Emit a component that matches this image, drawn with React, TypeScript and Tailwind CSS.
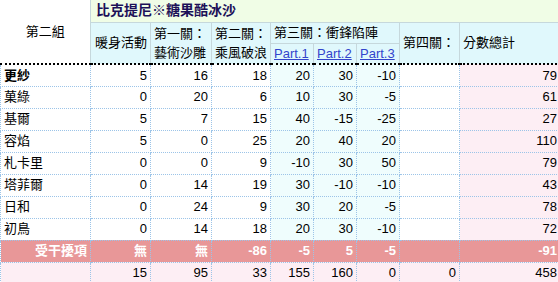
import { memo } from 'react'

const FONT = `font-['Liberation_Sans','Noto_Sans_CJK_TC',sans-serif]`
const HEAD = 'border border-[#c6d8dc] bg-[#e0f8fc] font-normal text-left align-middle px-[3px]'
const CELL_BASE = 'border border-dotted border-[#9cc4e8] px-[3px] h-[22px] p-0'
const CELL = `${CELL_BASE} text-right`

interface Row {
  name: string
  bold?: boolean
  vals: (number | string)[]
  total: number
}

const rows: Row[] = [
  { name: '更紗', bold: true, vals: [5, 16, 18, 20, 30, -10, ''], total: 79 },
  { name: '菓綠', vals: [0, 20, 6, 10, 30, -5, ''], total: 61 },
  { name: '基爾', vals: [5, 7, 15, 40, -15, -25, ''], total: 27 },
  { name: '容焰', vals: [5, 0, 25, 20, 40, 20, ''], total: 110 },
  { name: '札卡里', vals: [0, 0, 9, -10, 30, 50, ''], total: 79 },
  { name: '塔菲爾', vals: [0, 14, 19, 30, -10, -10, ''], total: 43 },
  { name: '日和', vals: [0, 24, 9, 30, 20, -5, ''], total: 78 },
  { name: '初鳥', vals: [0, 14, 18, 20, 30, -10, ''], total: 72 },
]

const penalty = ['無', '無', -86, -5, 5, -5, '']
const sums = [15, 95, 33, 155, 160, 0, 0]

const colBg = (i: number) => (i >= 3 && i <= 5 ? 'bg-[#effdfd]' : 'bg-white')

const ScoreTable = memo(function ScoreTable() {
  return (
    <table className={`table-fixed border-collapse w-[560px] text-[13px] text-black ${FONT}`}>
      <colgroup>
        <col className="w-[90px]" />
        <col className="w-[60px]" />
        <col className="w-[61px]" />
        <col className="w-[59px]" />
        <col className="w-[43px]" />
        <col className="w-[43px]" />
        <col className="w-[43px]" />
        <col className="w-[60px]" />
        <col className="w-[101px]" />
      </colgroup>
      <thead>
        <tr className="h-[22px]">
          <th
            rowSpan={3}
            className="border-r border-[#c6d8dc] bg-white font-normal text-center align-middle"
          >
            第二組
          </th>
          <th
            colSpan={8}
            className="border-b border-l border-[#c6d8dc] bg-[#f0fde6] text-left px-[5px] font-bold text-[14px] text-[#1c1058]"
          >
            比克提尼※糖果酷冰沙
          </th>
        </tr>
        <tr className="h-[21px]">
          <th rowSpan={2} className={`${HEAD} pl-[4px]`}>
            暖身活動
          </th>
          <th rowSpan={2} className={`${HEAD} leading-[19px]`}>
            第一關：
            <br />
            藝術沙雕
          </th>
          <th rowSpan={2} className={`${HEAD} leading-[19px]`}>
            第二關：
            <br />
            乘風破浪
          </th>
          <th colSpan={3} className={HEAD}>
            第三關：衝鋒陷陣
          </th>
          <th rowSpan={2} className={HEAD}>
            第四關：
          </th>
          <th rowSpan={2} className={HEAD}>
            分數總計
          </th>
        </tr>
        <tr className="h-[21px]">
          {['Part.1', 'Part.2', 'Part.3'].map((p) => (
            <th key={p} className={HEAD}>
              <a href="#" className="text-[#3344cc] underline">
                {p}
              </a>
            </th>
          ))}
        </tr>
      </thead>
      <tbody>
        {rows.map((r, ri) => {
          const top = ri === 0 ? 'border-t-2 border-t-black border-t-solid' : ''
          return (
            <tr key={r.name}>
              <td
                className={`${CELL_BASE} ${top} text-left bg-white ${r.bold ? 'font-bold' : ''}`}
              >
                {r.name}
              </td>
              {r.vals.map((v, i) => (
                <td key={i} className={`${CELL} ${top} ${colBg(i)}`}>
                  {v}
                </td>
              ))}
              <td className={`${CELL} ${top} bg-[#fdeef4]`}>{r.total}</td>
            </tr>
          )
        })}
        <tr className="bg-[#e89798] text-white font-bold">
          <td className={CELL}>受干擾項</td>
          {penalty.map((v, i) => (
            <td key={i} className={CELL}>
              {v}
            </td>
          ))}
          <td className={CELL}>-91</td>
        </tr>
        <tr className="bg-[#fdeef4]">
          <td className={CELL}></td>
          {sums.map((v, i) => (
            <td key={i} className={CELL}>
              {v}
            </td>
          ))}
          <td className={CELL}>458</td>
        </tr>
      </tbody>
    </table>
  )
})

export default function App() {
  return (
    <div className="w-[558px] h-[282px] overflow-hidden bg-white">
      <ScoreTable />
    </div>
  )
}
